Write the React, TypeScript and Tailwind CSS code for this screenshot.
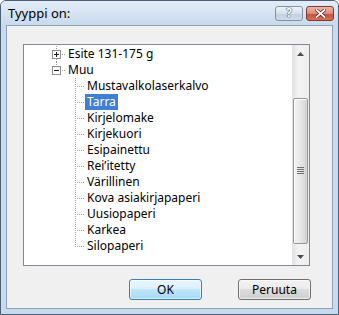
import React from 'react';

// Tree connector pieces, 16px rows like the Win7 tree view
const DOT = { stroke: '#a0a0a0', strokeWidth: 1, strokeDasharray: '1 1', shapeRendering: 'crispEdges' as const };

function ParentConnector({ expanded, lineBelow }: { expanded: boolean; lineBelow: boolean }): JSX.Element {
  return (
    <svg width="42" height="16" className="shrink-0">
      <line x1="32.5" y1="0" x2="32.5" y2="4" {...DOT} />
      {lineBelow && <line x1="32.5" y1="13" x2="32.5" y2="16" {...DOT} />}
      <line x1="38" y1="8.5" x2="42" y2="8.5" {...DOT} />
      <rect x="28.5" y="4.5" width="8" height="8" fill="#fdfdfd" stroke="#8f8f8f" shapeRendering="crispEdges" />
      <line x1="30" y1="8.5" x2="35" y2="8.5" stroke="#1e1e1e" shapeRendering="crispEdges" />
      {!expanded && <line x1="32.5" y1="6" x2="32.5" y2="11" stroke="#1e1e1e" shapeRendering="crispEdges" />}
    </svg>
  );
}

function ChildConnector({ last }: { last: boolean }): JSX.Element {
  return (
    <svg width="61" height="16" className="shrink-0">
      <line x1="51.5" y1="0" x2="51.5" y2={last ? 9 : 16} {...DOT} />
      <line x1="53" y1="8.5" x2="61" y2="8.5" {...DOT} />
    </svg>
  );
}

const paperTypes = [
  'Mustavalkolaserkalvo',
  'Tarra',
  'Kirjelomake',
  'Kirjekuori',
  'Esipainettu',
  'Rei\u2019itetty',
  'Värillinen',
  'Kova asiakirjapaperi',
  'Uusiopaperi',
  'Karkea',
  'Silopaperi',
];

function Scrollbar(): JSX.Element {
  return (
    <div className="flex h-full w-[17px] shrink-0 flex-col bg-[linear-gradient(to_right,#e3e3e3,#f3f3f3_40%,#eeeeee)]">
      <div className="flex h-[17px] items-center justify-center">
        <svg width="7" height="4"><path d="M0 4 L3.5 0 L7 4 Z" fill="#4d4d4d" /></svg>
      </div>
      <div className="flex-1">
        <div className="mx-[1px] mt-[36px] flex h-[146px] items-center justify-center rounded-[2px] border border-[#979797] bg-[linear-gradient(to_right,#f4f4f4,#e6e6e6_50%,#d3d3d3)] shadow-[inset_1px_1px_0_#ffffff]">
          <svg width="7" height="8">
            <rect x="0" y="0" width="7" height="1" fill="#6f6f6f" />
            <rect x="0" y="2" width="7" height="1" fill="#6f6f6f" />
            <rect x="0" y="4" width="7" height="1" fill="#6f6f6f" />
            <rect x="0" y="6" width="7" height="1" fill="#6f6f6f" />
          </svg>
        </div>
      </div>
      <div className="flex h-[17px] items-center justify-center">
        <svg width="7" height="4"><path d="M0 0 L7 0 L3.5 4 Z" fill="#4d4d4d" /></svg>
      </div>
    </div>
  );
}

export default function App(): JSX.Element {
  return (
    <div className="flex h-[315px] w-[339px] flex-col rounded-t-[6px] border border-[#4c5f76] bg-[#c7daee] font-['Noto_Sans','Open_Sans',sans-serif] text-[12px] text-black">
      {/* Title bar */}
      <div className="flex h-[24px] shrink-0 items-center justify-between rounded-t-[5px] bg-[linear-gradient(to_bottom,#e3edf8,#c9daed)] pl-[7px] pr-[4px]">
        <span className="text-[13px] leading-none">Tyyppi on:</span>
        <div className="flex items-center gap-[3px]">
          <div className="flex h-[15px] w-[28px] items-center justify-center rounded-[3px] border border-[#8393a7] bg-[linear-gradient(to_bottom,#eef3f9,#d6e0ec_50%,#c2cfdf_51%,#cfdbea)] text-[12px] font-bold leading-none text-white [text-shadow:0_0_1px_#45505d,0_0_1px_#45505d,0_0_1px_#45505d]">
            ?
          </div>
          <div className="flex h-[15px] w-[28px] items-center justify-center rounded-[3px] border border-[#8a3529] bg-[linear-gradient(to_bottom,#ebb8ab,#d98a78_50%,#c5503b_51%,#d37158)]">
            <svg width="11" height="9" viewBox="0 0 11 9">
              <path d="M1.5 1 L9.5 8 M9.5 1 L1.5 8" stroke="#5a1e16" strokeWidth="3.2" strokeLinecap="square" />
              <path d="M1.5 1 L9.5 8 M9.5 1 L1.5 8" stroke="#ffffff" strokeWidth="1.8" strokeLinecap="square" />
            </svg>
          </div>
        </div>
      </div>

      {/* Client area */}
      <div className="mx-[5px] mb-[5px] flex flex-1 flex-col border border-[#8ea2b9] bg-[#f0f0f0] pl-[16px] pt-[18px]">
        <div className="flex h-[222px] w-[287px] border border-[#828790] bg-white">
          <div className="flex-1 pt-[1px]">
            <div className="flex h-[16px] items-center">
              <ParentConnector expanded={false} lineBelow />
              <span className="px-[2px] leading-[16px]">Esite 131-175 g</span>
            </div>
            <div className="flex h-[16px] items-center">
              <ParentConnector expanded lineBelow={false} />
              <span className="px-[2px] leading-[16px]">Muu</span>
            </div>
            {paperTypes.map((name, i) => (
              <div key={name} className="flex h-[16px] items-center">
                <ChildConnector last={i === paperTypes.length - 1} />
                <span
                  className={`px-[2px] leading-[16px] whitespace-nowrap ${
                    name === 'Tarra' ? 'bg-[#3f7fd4] text-white' : ''
                  }`}
                >
                  {name}
                </span>
              </div>
            ))}
          </div>
          <Scrollbar />
        </div>

        <div className="mt-[13px] flex justify-end gap-[36px] pr-[21px]">
          <button
            type="button"
            className="h-[21px] w-[73px] rounded-[3px] border border-[#3c7fb1] bg-[linear-gradient(to_bottom,#eaf6fd,#d9f0fc_50%,#bee6fd_50%,#a7d9f5)] leading-none shadow-[inset_0_0_0_1px_rgba(255,255,255,0.55)]"
          >
            OK
          </button>
          <button
            type="button"
            className="h-[21px] w-[73px] rounded-[3px] border border-[#707070] bg-[linear-gradient(to_bottom,#f2f2f2,#ebebeb_50%,#dddddd_50%,#cfcfcf)] leading-none shadow-[inset_0_0_0_1px_rgba(255,255,255,0.6)]"
          >
            Peruuta
          </button>
        </div>
      </div>
    </div>
  );
}
